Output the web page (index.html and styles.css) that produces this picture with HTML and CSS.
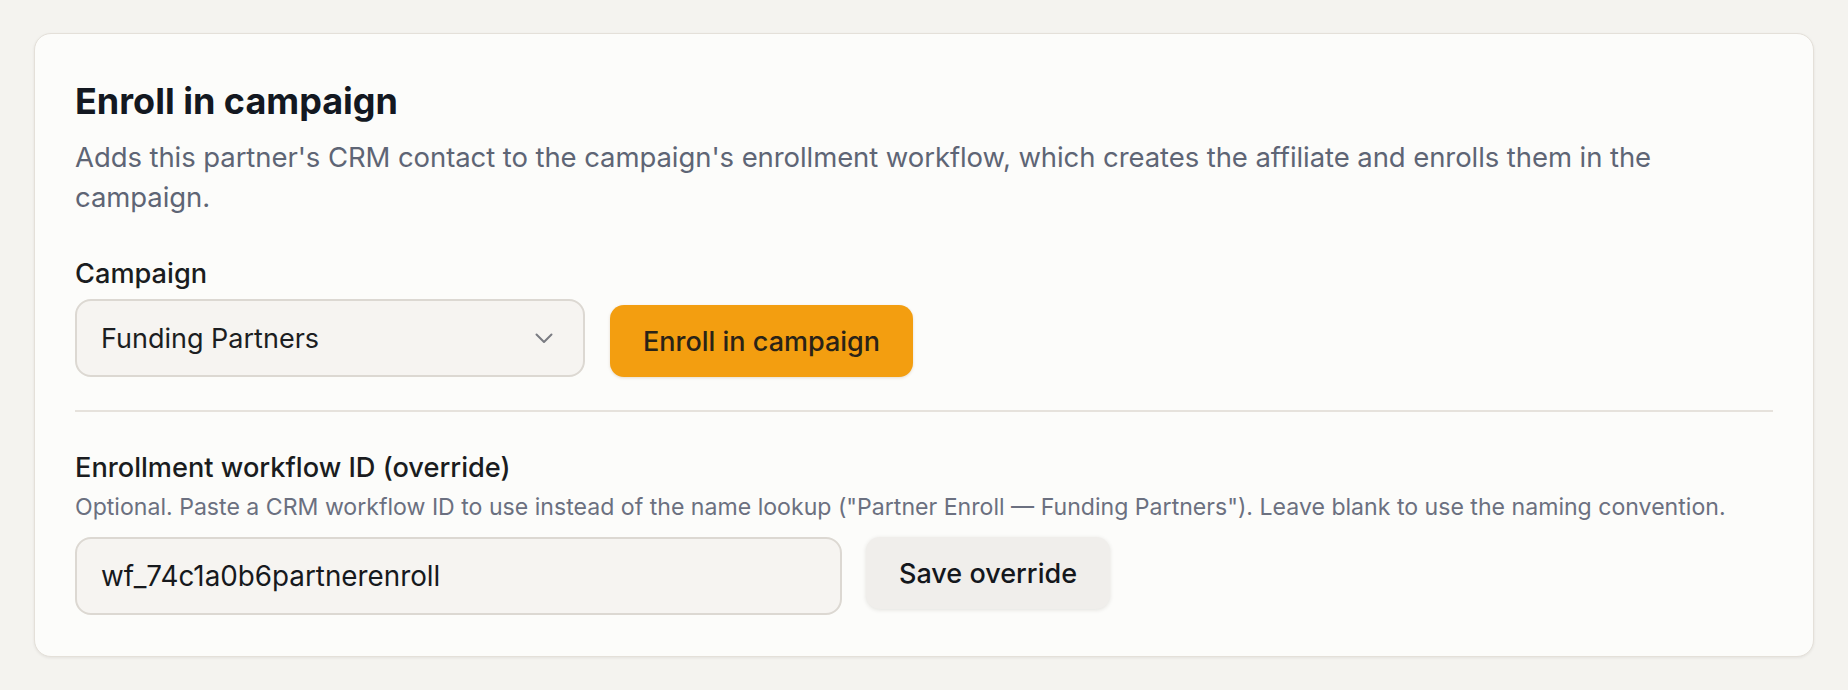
FILE: index.html
```html
<!DOCTYPE html>
<html lang="en">
<head>
<meta charset="utf-8">
<title>Enroll in campaign</title>
<link rel="stylesheet" href="styles.css">
</head>
<body>
<main class="page">
  <section class="card">
    <h2 class="title">Enroll in campaign</h2>
    <p class="desc">Adds this partner's CRM contact to the campaign's enrollment workflow, which creates the affiliate and enrolls them in the campaign.</p>

    <div class="campaign-row">
      <div class="field">
        <label class="label" for="campaign">Campaign</label>
        <div class="select" id="campaign">
          <span class="select-value">Funding Partners</span>
          <svg class="chevron" width="18" height="11" viewBox="0 0 18 11" aria-hidden="true"><polyline points="1.5,1.5 9,9 16.5,1.5" fill="none" stroke="#7a7b82" stroke-width="2" stroke-linecap="round" stroke-linejoin="round"/></svg>
        </div>
      </div>
      <button class="btn btn-primary" type="button">Enroll in campaign</button>
    </div>

    <div class="divider"></div>

    <div class="field">
      <label class="label" for="wf">Enrollment workflow ID (override)</label>
      <p class="helper">Optional. Paste a CRM workflow ID to use instead of the name lookup ("Partner Enroll — Funding Partners"). Leave blank to use the naming convention.</p>
      <div class="override-row">
        <div class="input" id="wf">wf_74c1a0b6partnerenroll</div>
        <button class="btn btn-secondary" type="button">Save override</button>
      </div>
    </div>
  </section>
</main>
</body>
</html>
```

FILE: styles.css
```css
* { box-sizing: border-box; }

html, body {
  margin: 0;
  padding: 0;
  background: #f4f3ef;
}

body {
  font-family: Inter, "Noto Sans", "Liberation Sans", sans-serif;
  color: #1b1d22;
}

.page {
  padding: 33px 34px;
}

.card {
  background: #fcfcfa;
  border: 1px solid #e4e0d9;
  border-radius: 17px;
  box-shadow: 0 1px 3px rgba(40, 30, 20, 0.08);
  padding: 46px 40px 41px;
}

.title {
  margin: 0;
  font-size: 36px;
  line-height: 42px;
  font-weight: 700;
  color: #131821;
}

.desc {
  margin: 16px 0 0;
  font-size: 27.5px;
  line-height: 39.5px;
  letter-spacing: -0.08px;
  color: #5e6575;
}

.campaign-row {
  display: flex;
  align-items: flex-end;
  gap: 25px;
  margin-top: 40px;
}

.field {
  display: flex;
  flex-direction: column;
}

.label {
  font-size: 27.2px;
  line-height: 34px;
  font-weight: 500;
  color: #1a1c20;
}

.select {
  margin-top: 8px;
  width: 510px;
  height: 78px;
  border: 2px solid #dcd8d2;
  border-radius: 16px;
  background: #f6f4f1;
  display: flex;
  align-items: center;
  justify-content: space-between;
  padding: 0 30px 0 24px;
}

.select-value {
  font-size: 27px;
  color: #1c1e22;
}

.chevron { display: block; }

.btn {
  font-family: inherit;
  font-size: 27px;
  font-weight: 500;
  height: 72px;
  padding: 0 33px;
  border: none;
  border-radius: 14px;
  cursor: pointer;
}

.btn-primary {
  background: #f39e10;
  color: #2a2317;
  box-shadow: 0 1px 3px rgba(120, 70, 0, 0.18);
}

.btn-secondary {
  background: #f0eeeb;
  color: #14171c;
  box-shadow: 0 1px 4px rgba(40, 30, 20, 0.12);
}

.divider {
  height: 2px;
  background: #e6e2dc;
  margin: 33px 0 39px;
}

.helper {
  margin: 5px 0 0;
  font-size: 23.1px;
  line-height: 34px;
  color: #6b7080;
}

.override-row {
  display: flex;
  align-items: flex-start;
  gap: 24px;
  margin-top: 13px;
}

.input {
  width: 767px;
  height: 78px;
  border: 2px solid #dcd8d2;
  border-radius: 16px;
  background: #f6f4f1;
  display: flex;
  align-items: center;
  padding: 0 24px;
  font-size: 27.8px;
  color: #17191d;
}
```
